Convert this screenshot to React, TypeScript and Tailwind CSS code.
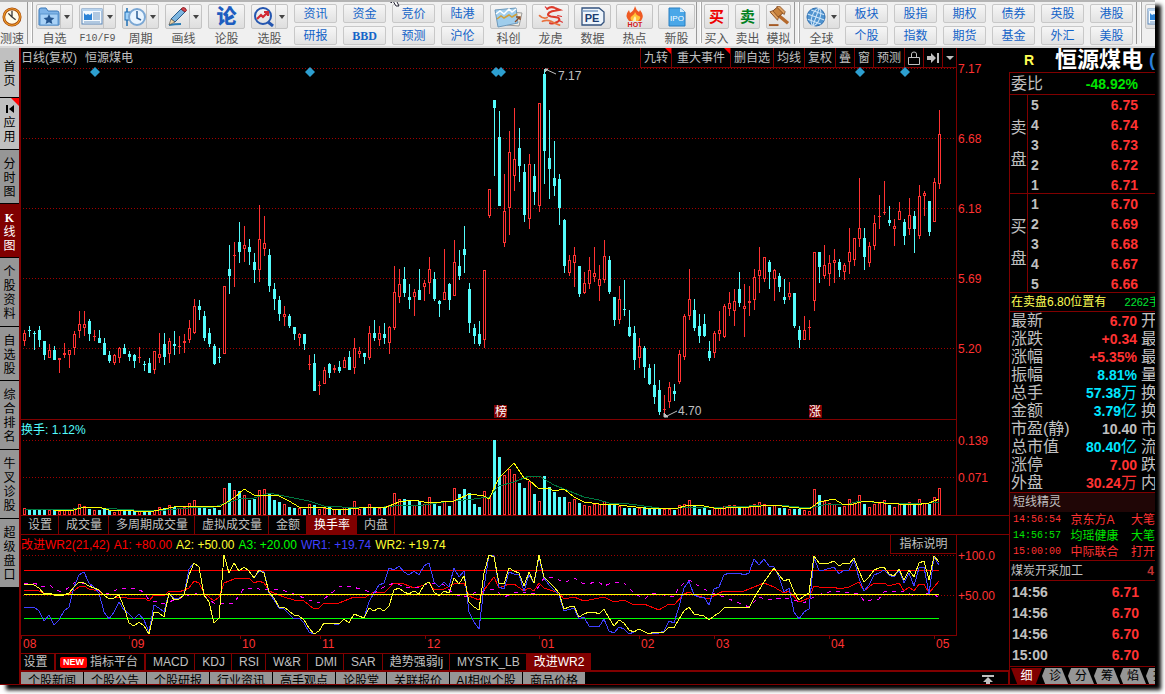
import type { ReactNode } from 'react';

// One entry per day: high, body top, body bottom, low (chart y), 1 = up / 0 = down
const CANDLES = `330,333,341,346,1 326,330,331,337,0 331,333,334,350,0 326,330,340,347,0 341,341,355,360,0
344,350,358,358,1 346,350,360,360,0 358,358,360,373,1 343,353,355,358,1 350,350,355,368,1
331,334,348,355,1 311,324,331,338,1 311,324,328,336,1 319,321,334,341,0 330,336,337,341,1
330,338,343,343,0 338,343,355,355,0 351,355,361,363,0 354,355,363,365,1 347,348,358,363,1
344,348,354,354,0 351,354,357,361,0 354,355,361,368,0 347,357,358,363,1 361,364,365,371,0
358,363,373,373,0 351,351,370,374,1 333,354,358,363,1 333,344,357,365,0 338,341,354,363,1
331,344,346,355,0 336,346,347,354,1 334,341,343,353,1 320,328,340,343,1 299,306,333,334,1
300,306,310,320,0 311,316,338,341,0 328,333,344,347,0 344,346,364,365,0 348,357,358,363,0
286,286,354,354,1 245,269,276,294,0 242,255,256,287,1 222,242,252,263,0 226,245,249,262,1
239,247,252,265,0 253,262,270,283,0 205,239,270,282,1 216,243,249,256,1 249,255,286,292,0
283,289,299,310,0 296,300,314,321,0 306,314,317,326,1 314,316,326,328,0 327,327,334,340,0
333,334,338,346,1 334,334,344,350,0 355,364,365,370,1 354,363,391,391,0 381,385,386,395,1
367,370,384,384,1 363,364,373,378,0 365,368,370,373,1 361,367,371,373,0 357,360,368,368,1
351,357,370,370,0 338,348,368,374,1 347,351,354,358,1 353,353,357,364,0 326,333,358,360,1
320,333,338,341,0 326,333,340,346,1 323,334,338,344,0 326,327,343,354,1 266,292,328,330,1
269,284,297,303,1 267,279,293,297,0 284,297,300,309,0 289,292,297,316,1 269,290,300,300,0
280,283,287,301,1 257,269,283,294,1 272,279,299,301,0 300,301,304,317,0 249,292,300,300,1
283,284,300,310,0 240,262,296,296,1 250,266,276,280,0 226,249,255,273,0 283,289,323,333,0
324,328,336,344,0 321,334,344,346,0 270,270,340,348,1 189,189,216,218,1 100,100,108,176,0
111,137,206,206,0 174,211,243,247,1 131,152,208,235,1 108,159,176,191,1 128,148,166,182,0
164,172,215,222,0 154,164,219,229,1 164,176,192,205,0 103,103,206,212,1 69,74,151,184,0
110,158,169,199,0 141,178,186,196,0 174,179,208,225,0 219,220,266,273,0 255,260,273,276,1
247,255,263,287,1 266,266,294,297,0 272,283,293,294,1 257,270,284,289,1 247,273,277,282,1
265,279,286,301,1 240,256,280,283,1 256,260,292,294,0 297,297,320,326,0 286,299,320,324,1
280,309,310,316,0 310,327,336,337,0 326,333,360,370,0 338,346,358,368,1 346,348,367,378,0
364,368,384,385,0 364,385,397,404,0 380,390,412,415,0 395,409,410,416,1 382,387,402,408,1
384,391,394,401,0 350,354,382,384,1 314,316,357,360,1 269,299,316,320,1 299,310,328,331,0
314,326,336,343,0 314,324,336,337,0 341,351,358,361,0 331,333,353,358,1 311,330,334,341,1
304,306,337,338,1 292,303,309,316,1 289,301,311,326,1 272,289,303,307,0 284,306,309,337,1
286,301,303,316,1 269,277,300,310,1 247,270,276,293,1 257,257,279,282,1 260,262,272,289,0
269,270,279,301,1 273,276,287,292,0 279,297,300,304,0 282,293,297,300,1 293,293,326,328,0
326,330,340,348,0 316,330,340,340,1 320,327,328,340,1 252,252,301,311,1 252,252,267,283,0
245,265,276,279,1 255,263,274,286,1 249,260,263,283,1 259,262,270,277,0 263,265,272,280,1
228,252,262,274,1 238,238,260,266,1 178,228,239,247,1 228,238,257,270,0 242,246,263,267,1
215,223,246,250,1 195,216,217,229,1 181,212,213,215,1 206,220,223,226,0 219,226,229,246,1
202,211,220,220,1 219,222,236,245,0 198,215,229,235,1 211,216,229,253,0 185,196,236,239,1
191,193,196,216,1 201,201,232,236,0 178,182,222,222,1 110,134,184,189,1`
  .split(/\s+/)
  .map((c) => c.split(',').map(Number));

const TURNOVER = [
  7, 5, 5, 5, 5, 5, 5, 4, 5, 5, 7, 11, 9, 6, 5, 5, 6, 5, 3, 5, 6, 5, 5, 5, 3, 3, 5, 8, 7, 10, 8, 7, 8, 12, 15, 8, 8, 6,
  7, 5, 27, 32, 25, 24, 20, 15, 16, 25, 26, 21, 15, 13, 11, 8, 7, 7, 6, 11, 10, 6, 7, 8, 6, 6, 8, 8, 14, 6, 7, 11, 8, 7,
  8, 10, 22, 16, 16, 14, 10, 14, 11, 18, 12, 9, 14, 9, 27, 21, 26, 22, 11, 8, 24, 18, 75, 58, 40, 46, 41, 32, 27, 34,
  21, 14, 39, 28, 23, 18, 18, 13, 16, 12, 10, 9, 11, 11, 14, 11, 10, 9, 7, 7, 7, 7, 8, 7, 7, 7, 6, 6, 5, 10, 11, 15, 9,
  6, 7, 5, 7, 8, 9, 10, 10, 7, 8, 8, 11, 13, 11, 8, 10, 7, 7, 6, 6, 6, 5, 4, 26, 20, 14, 12, 11, 8, 9, 16, 12, 20, 11,
  8, 11, 12, 15, 10, 8, 11, 10, 13, 10, 16, 12, 11, 18, 27,
];

// Line series are "day,y" pairs; days in between are interpolated
const TURNOVER_MA5 =
  '6,510 10,510 12,507 15,507 17,510 22,511 26,511 30,507 33,506 39,507 42,498 44,489 46,495 51,496 53,501 55,507 59,507 63,510 69,507 72,508 75,502 78,500 81,503 86,501 89,494 92,496 93,499 95,478 98,463 100,478 101,480 103,489 105,488 106,491 108,489 110,497 112,502 115,504 119,505 124,508 130,509 133,505 136,506 139,509 142,507 145,507 150,505 153,507 157,509 159,502 162,499 164,505 166,504 168,501 172,503 178,505 181,503 183,499';
const TURNOVER_MA10 =
  '0,509 9,510 12,507 22,510 26,511 33,508 38,507 43,499 46,498 49,493 52,496 57,501 60,506 67,508 72,507 76,505 80,505 84,502 90,499 93,497 95,486 98,482 101,476 103,476 106,485 109,491 112,497 115,500 117,503 121,504 127,508 131,508 140,507 150,505 153,506 157,508 160,505 165,504 167,501 175,504 181,503 183,502';
const WR1 =
  '0,607 2,607 3,611 4,621 5,615 6,625 7,620 8,611 9,607 10,587 11,575 12,572 13,583 14,587 15,593 16,612 17,619 18,612 19,602 20,610 21,614 22,619 23,614 24,620 25,632 26,605 27,608 28,612 29,593 30,598 31,598 32,595 33,569 34,563 35,567 36,595 37,602 38,623 39,618 40,555 41,573 42,563 43,571 44,567 45,571 46,578 47,571 48,572 49,593 50,600 51,608 52,609 53,614 54,619 55,618 56,623 57,632 58,634 59,631 60,623 62,624 63,624 64,619 65,623 66,614 68,618 69,602 70,593 71,585 72,583 73,568 74,570 75,566 76,572 77,575 78,571 79,575 80,566 81,563 82,582 83,587 84,582 85,587 86,568 87,577 88,571 89,612 90,622 91,629 92,587 93,555 94,556 95,587 96,589 97,572 98,574 99,575 100,591 101,575 102,583 103,557 104,578 105,585 106,590 107,595 108,611 110,608 111,619 112,617 113,626 115,627 116,619 117,631 118,633 119,627 120,629 121,634 122,632 123,629 125,634 127,633 128,631 129,621 130,623 131,607 132,588 133,581 134,595 135,597 136,597 137,605 138,589 139,587 140,575 141,573 143,573 144,575 145,573 146,559 147,565 148,559 149,566 150,567 151,577 152,592 153,588 154,612 155,619 156,612 157,609 158,558 159,570 160,570 162,567 163,574 164,570 165,570 166,560 167,578 168,591 169,585 170,575 171,573 172,570 173,575 174,577 175,570 176,583 177,573 178,586 179,568 180,567 181,594 182,557 183,565';
const WR2 =
  '0,584 2,585 3,588 4,594 5,593 6,595 8,595 9,593 10,587 11,582 12,583 13,586 14,588 15,590 16,595 17,599 18,598 19,595 20,607 21,623 22,626 23,622 24,626 25,634 26,612 27,613 28,617 29,593 30,600 31,599 32,595 33,575 34,563 35,567 36,595 37,602 38,623 39,618 40,555 41,573 42,563 43,571 44,567 45,571 46,578 47,570 48,573 49,592 50,598 51,607 52,607 53,611 54,615 55,616 56,620 57,628 58,634 59,631 60,623 63,624 64,619 65,623 66,614 68,618 69,608 70,611 71,608 72,611 73,606 74,590 75,588 76,592 77,594 78,591 79,594 80,585 81,582 82,592 83,596 84,591 85,593 86,578 87,584 88,576 89,602 90,607 91,610 92,573 93,555 94,557 95,583 96,584 97,568 98,571 99,573 100,586 101,572 102,583 103,555 104,577 105,582 106,587 107,593 108,609 109,607 110,606 111,617 112,614 113,612 114,612 115,614 116,609 117,618 118,626 119,620 120,623 121,630 122,632 123,629 125,634 126,632 128,632 129,627 130,628 131,619 132,611 133,607 134,614 136,616 137,620 138,616 139,613 140,608 142,607 145,608 146,598 147,590 148,582 149,575 150,568 151,575 152,581 153,579 154,592 155,600 156,596 157,593 158,556 159,563 161,563 162,561 163,566 164,563 165,564 166,558 167,571 168,582 169,577 170,570 171,568 172,567 173,574 174,576 175,569 176,580 177,570 178,577 179,563 180,561 181,580 182,556 183,562';
const WR_RED =
  '0,590 3,591 4,593 7,596 9,594 11,587 12,586 13,589 15,591 17,599 19,597 22,599 24,598 25,601 26,595 28,596 29,591 31,592 33,588 34,581 35,583 36,593 38,601 39,597 40,583 42,579 45,578 46,583 47,581 48,583 49,591 52,597 54,600 56,601 58,609 59,608 60,603 63,603 64,601 66,597 68,598 70,592 72,593 74,583 76,584 78,588 80,585 81,582 82,590 84,589 86,584 88,583 89,596 91,600 92,590 94,577 95,588 97,584 98,584 100,591 101,588 102,591 103,583 104,588 107,593 108,599 110,597 112,601 115,598 116,597 118,602 120,600 122,605 124,604 127,610 129,604 130,605 132,594 133,592 134,595 137,599 139,593 140,591 144,591 147,585 148,583 150,587 152,593 153,591 155,602 157,598 158,586 160,588 162,587 163,589 165,587 167,582 168,591 170,583 172,583 173,586 175,583 176,591 177,587 178,591 179,584 180,584 181,593 183,581';
const WR_DASH =
  '0,584 2,583 4,587 5,585 7,591 8,591 10,583 11,582 13,585 15,591 17,594 19,588 22,588 24,592 25,600 28,604 30,600 32,597 34,593 36,596 38,603 42,603 44,588 46,588 48,590 51,589 54,594 57,600 59,603 61,595 63,587 65,586 68,590 70,593 72,587 74,583 77,588 79,587 81,583 84,585 86,594 88,597 90,593 92,591 94,589 96,597 98,593 100,592 102,594 104,578 106,577 108,583 110,578 112,584 115,582 116,586 118,582 120,583 122,593 124,599 126,593 130,597 131,587 133,580 134,583 137,592 140,597 143,603 145,607 147,597 149,600 152,598 154,600 156,603 158,597 160,593 162,591 164,592 167,594 168,601 171,599 172,592 176,591 178,596 180,593 182,594 183,598';

const dayX = (day: number) => 3 + day * 5;

const toPoints = (series: string, top: number) =>
  series
    .split(' ')
    .map((p) => {
      const [day, y] = p.split(',').map(Number);
      return `${dayX(day)},${y - top}`;
    })
    .join(' ');

const MONTHS: [string, number][] = [
  ['08', 1], ['09', 109], ['10', 220], ['11', 300], ['12', 405],
  ['01', 519], ['02', 619], ['03', 694], ['04', 809], ['05', 914],
];

function Dotted({ y }: { y: number }) {
  return <line x1="2" x2="935" y1={y + 0.5} y2={y + 0.5} stroke="#a00000" strokeDasharray="1 2" />;
}

function AxisLabel({ y, children }: { y: number; children: string }) {
  return (
    <text x="937" y={y} fill="#ff3232" fontSize="12">
      {children}
    </text>
  );
}

function PriceChart() {
  const top = 68;
  return (
    <svg className="block h-[352px] w-full overflow-visible" shapeRendering="crispEdges">
      {[68, 138, 208, 278, 348].map((y) => (
        <Dotted key={y} y={y - top} />
      ))}
      {CANDLES.map(([high, open, close, low, up], i) => {
        const x = dayX(i);
        const color = up ? '#ff3232' : '#54fcfc';
        const h = Math.max(close - open, 1);
        return (
          <g key={i} fill={color}>
            <rect x={x} y={high - top} width="1" height={low - high} />
            <rect x={x - 1} y={open - top} width="3" height={h} />
            {up === 1 && h > 2 && <rect x={x} y={open - top + 1} width="1" height={h - 2} fill="#000" />}
          </g>
        );
      })}
      {[95, 310, 496, 501, 860, 905].map((x) => (
        <path key={x} d={`M${x - 26} 4l5-5 5 5-5 5z`} fill="#2d9fd0" shapeRendering="auto" />
      ))}
      <g stroke="#c0c0c0" fill="#c0c0c0" shapeRendering="auto">
        <path d="M524 1l11 5M524 1h3l-3 3zM644 349l12-6M643 349h4l-4-4z" />
      </g>
      <g fill="#c0c0c0" fontSize="12">
        <text x="537" y="12">7.17</text>
        <text x="657" y="347">4.70</text>
      </g>
      <g fill="#800000">
        <rect x="473" y="337" width="13" height="13" />
        <rect x="788" y="337" width="13" height="13" />
      </g>
      <g fill="#fff" fontSize="12">
        <text x="474" y="348">榜</text>
        <text x="788" y="348">涨</text>
      </g>
      <AxisLabel y={5}>7.17</AxisLabel>
      <AxisLabel y={75}>6.68</AxisLabel>
      <AxisLabel y={145}>6.18</AxisLabel>
      <AxisLabel y={215}>5.69</AxisLabel>
      <AxisLabel y={285}>5.20</AxisLabel>
      <rect x="935" y="0" width="1" height="352" fill="#800000" />
      <rect x="0" y="351" width="935" height="1" fill="#800000" />
    </svg>
  );
}

function TurnoverChart() {
  const top = 420;
  return (
    <svg className="block h-[95px] w-full" shapeRendering="crispEdges">
      <text x="0" y="14" fill="#54fcfc" fontSize="12">
        换手: 1.12%
      </text>
      <Dotted y={20} />
      <Dotted y={57} />
      {TURNOVER.map((h, i) => {
        const up = CANDLES[i][4] === 1;
        return (
          <g key={i}>
            <rect x={dayX(i) - 1} y={95 - h} width="3" height={h} fill={up ? '#ff3232' : '#54fcfc'} />
            {up && <rect x={dayX(i)} y={96 - h} width="1" height={h - 2} fill="#000" />}
          </g>
        );
      })}
      <polyline points={toPoints(TURNOVER_MA10, top)} fill="none" stroke="#007840" />
      <polyline points={toPoints(TURNOVER_MA5, top)} fill="none" stroke="#ffff00" />
      <AxisLabel y={25}>0.139</AxisLabel>
      <AxisLabel y={62}>0.071</AxisLabel>
      <rect x="935" y="0" width="1" height="95" fill="#800000" />
    </svg>
  );
}

function WrChart() {
  const top = 554;
  return (
    <svg className="block h-[99px] w-full overflow-visible" shapeRendering="crispEdges">
      <Dotted y={1} />
      <Dotted y={41} />
      <rect x="3" y="16" width="915" height="1" fill="#ff0000" />
      <rect x="3" y="64" width="915" height="1" fill="#00ff00" />
      <polyline points={toPoints(WR_RED, top)} fill="none" stroke="#ff0000" />
      <polyline points={toPoints(WR_DASH, top)} fill="none" stroke="#ff00ff" strokeDasharray="4 5" />
      <polyline points={toPoints(WR1, top)} fill="none" stroke="#4040ff" />
      <polyline points={toPoints(WR2, top)} fill="none" stroke="#ffff30" />
      <rect x="3" y="40" width="915" height="1" fill="#ffff00" />
      <rect x="0" y="81" width="936" height="1" fill="#800000" />
      <rect x="935" y="-19" width="1" height="101" fill="#800000" />
      {MONTHS.map(([label, x]) => (
        <g key={label}>
          <rect x={x - 1} y="81" width="1" height="4" fill="#800000" />
          <text x={x + 1} y="94" fill="#ff3232" fontSize="12">
            {label}
          </text>
        </g>
      ))}
      <AxisLabel y={6}>+100.0</AxisLabel>
      <AxisLabel y={46}>+50.00</AxisLabel>
    </svg>
  );
}

/* ---------- toolbar ---------- */

const ICONS: Record<string, ReactNode> = {
  speed: (
    <svg viewBox="0 0 22 22" className="size-[20px]">
      <circle cx="11" cy="11" r="9" fill="#fffbe8" stroke="#a5480c" strokeWidth="3" />
      <circle cx="11" cy="11" r="9" fill="none" stroke="#f5a52a" strokeWidth="1.200" />
      <path d="M11 4v7l4 3M11 11L7 7" stroke="#333" strokeWidth="1.400" fill="none" />
    </svg>
  ),
  folder: (
    <svg viewBox="0 0 22 20" className="h-[20px] w-[22px]">
      <path d="M1 18V3q0-2 2-2h5l2 3h9q2 0 2 2v12z" fill="#7fb4e8" stroke="#3b78b8" />
      <path d="M2 18V7h18v11z" fill="#a9d2f7" stroke="#5c96cf" />
      <path d="M11 7l1.600 3.500 3.800.4-2.900 2.500.9 3.700L11 15.200l-3.400 1.900.9-3.700-2.900-2.500 3.800-.4z" fill="#24558f" />
    </svg>
  ),
  news: (
    <svg viewBox="0 0 22 20" className="h-[20px] w-[22px]">
      <rect x="1" y="2" width="20" height="15" fill="#f4faff" stroke="#5a86b8" />
      <rect x="1" y="2" width="20" height="2" fill="#b6d3ee" />
      <path d="M3 6l2 2 2-1 2 1 2-2v7H3z" fill="#2c83d6" />
      <path d="M12 6h7M12 8h7M12 10h7M12 12h7M3 15h16" stroke="#6f97c2" />
    </svg>
  ),
  period: (
    <svg viewBox="0 0 22 20" className="h-[20px] w-[22px]">
      <path d="M3 1v18" stroke="#1f6fb5" strokeWidth="1.500" />
      <rect x="1" y="5" width="5" height="8" fill="#9fd2fa" stroke="#1f6fb5" />
      <circle cx="13" cy="10" r="8" fill="#eaf5ff" stroke="#7aa7d4" strokeWidth="2" />
      <path d="M13 4v7l4 2" stroke="#2c5f98" strokeWidth="1.500" fill="none" />
    </svg>
  ),
  pencil: (
    <svg viewBox="0 0 22 20" className="h-[20px] w-[22px]">
      <path d="M2 18q6-1 12-1" stroke="#2d7db4" strokeWidth="2" fill="none" />
      <path d="M4 12L14 2l4 3L8 15z" fill="#7db5df" stroke="#2a5d8c" />
      <path d="M14 2l2-1.500q3 0 3.500 3L18 5z" fill="#d8424a" stroke="#8c2a30" />
      <path d="M4 12l4 3-6 3z" fill="#f0d7a8" stroke="#444" strokeWidth=".6" />
    </svg>
  ),
  forum: <span className="text-[20px] leading-5 font-black text-[#1d5dc0]">论</span>,
  pick: (
    <svg viewBox="0 0 22 20" className="h-[20px] w-[22px]" fill="none">
      <circle cx="10" cy="9" r="8" stroke="#2456b0" strokeWidth="2" />
      <path d="M15 15l5 4" stroke="#2456b0" strokeWidth="3" />
      <path d="M4 12l4-4 2 2 5-5M11 5h4v4" stroke="#d22a35" strokeWidth="2.200" />
    </svg>
  ),
  chart: (
    <svg viewBox="0 0 30 22" className="h-[22px] w-[30px]">
      <path d="M15 6l13 1-3 13-12-1z" fill="#f4efe4" stroke="#9a9a9a" />
      <path d="M1 4l21-2 2 15-20 4z" fill="#9fcdec" stroke="#6d98ba" />
      <path d="M2 8l4-3 4 3 5-5 3 3 4-3" fill="none" stroke="#fff" strokeWidth="1.500" />
      <path d="M3 13l4-3 3 2 5-3 3 2 5-3" fill="none" stroke="#d0a03a" strokeWidth="1.500" />
      <path d="M21 16l5-5M22 11h4v3" fill="none" stroke="#8b4a25" strokeWidth="1.300" />
    </svg>
  ),
  dragon: (
    <svg viewBox="0 0 26 22" className="h-[21px] w-[26px]" fill="none" strokeLinecap="round">
      <path d="M9 3q4-3 8-1l5 2-5 1q-3 0-6 2-3 3 2 4l7 1q4 3-1 5-3 2-7 1" stroke="#dd3b2b" strokeWidth="2.200" />
      <path d="M1 10q4 4 8 2M4 16q5-2 9 0 5 3 9 4" stroke="#e8713e" strokeWidth="1.800" />
      <path d="M20 10l4 1M21 15l4 2M9 3L7 1" stroke="#d33" strokeWidth="1.200" />
    </svg>
  ),
  pe: (
    <svg viewBox="0 0 24 20" className="h-[20px] w-[24px]">
      <path d="M1 1h17l5 4v10l-3 3H1z" fill="#eef5fc" stroke="#33527d" strokeWidth="1.300" />
      <path d="M1 4h16" stroke="#7d9cc4" strokeWidth="1.500" />
      <text x="11" y="15" textAnchor="middle" fontSize="11" fontWeight="bold" fill="#1c3c70">PE</text>
    </svg>
  ),
  hot: (
    <svg viewBox="0 0 26 22" className="h-[22px] w-[26px]">
      <path d="M13 0q1 4 4 6l1-2q5 6 1 11H7Q2 10 7 4l1 3q4-2 5-7z" fill="#ef5a22" />
      <path d="M13 6q1 3 4 4t-1 5h-6q-3-3 0-5t3-4z" fill="#ffc33a" />
      <path d="M13 10q2 2 1 5h-3q0-3 2-5z" fill="#fff3b5" />
      <text x="13" y="21" textAnchor="middle" fontSize="7" fontWeight="bold" fill="#d31818">HOT</text>
    </svg>
  ),
  ipo: (
    <svg viewBox="0 0 18 20" className="h-[20px] w-[18px]">
      <path d="M1 1h11l5 4v14H1z" fill="#4aa7e8" stroke="#2a7fc0" />
      <path d="M12 1l5 4h-5z" fill="#d4ecfc" />
      <text x="9" y="14" textAnchor="middle" fontSize="8" fill="#fff">IPO</text>
    </svg>
  ),
  buy: <span className="text-[15px] leading-5 font-bold text-[#ee0000]">买</span>,
  sell: <span className="text-[15px] leading-5 font-bold text-[#008020]">卖</span>,
  hammer: (
    <svg viewBox="0 0 24 22" className="h-[21px] w-[23px]">
      <path d="M2 20h10" stroke="#a55a25" strokeWidth="2" />
      <path d="M11 9l11 9" stroke="#b5692c" strokeWidth="3.500" />
      <path d="M4 7l7-6 6 6-7 6z" fill="#c8823c" stroke="#7d431a" />
      <path d="M3 6l3-1 6 7-1 3zM10 1l3-1 6 6-1 3z" fill="#dfa262" stroke="#7d431a" strokeWidth=".8" />
    </svg>
  ),
  globe: (
    <svg viewBox="0 0 20 20" className="size-[20px]">
      <circle cx="10" cy="10" r="9" fill="#4f93cf" stroke="#2d6daf" />
      <g fill="none" stroke="#cfe6f9" transform="rotate(20 10 10)">
        <ellipse cx="10" cy="10" rx="4" ry="9" />
        <path d="M10 1v18M1 10h18M3 5h14M3 15h14" />
      </g>
    </svg>
  ),
};

function ToolButton({ icon, label, menu, small }: { icon: string; label: string; menu?: boolean; small?: boolean }) {
  return (
    <div className={`flex shrink-0 flex-col items-center ${small ? 'w-[25px]' : 'w-[37px]'}`}>
      <button
        type="button"
        aria-label={label}
        className="flex h-[25px] w-full rounded-xs border border-[#c4c4c4] bg-linear-to-b from-[#f6f6f6] to-[#dedede]"
      >
        <span className="flex h-full flex-1 items-center justify-center">{ICONS[icon]}</span>
        {menu && (
          <span className="flex h-full w-3 items-center justify-center border-l border-[#c4c4c4]">
            <span className="border-x-3 border-t-4 border-x-transparent border-t-[#444]" />
          </span>
        )}
      </button>
      <span
        className={`mt-[2px] leading-4 whitespace-nowrap text-[#555] ${label === 'F10/F9' ? "font-['Liberation_Mono','Noto_Sans_CJK_SC',monospace] text-[10px]" : 'text-[12px]'}`}
      >
        {label}
      </span>
    </div>
  );
}

function TextPair({ labels }: { labels: string[] }) {
  return (
    <div className="flex w-[43px] shrink-0 flex-col gap-[3px]">
      {labels.map((label) => (
        <button
          key={label}
          type="button"
          className={`h-[19px] rounded-xs border border-[#c8c8c8] bg-linear-to-b from-[#f6f6f6] to-[#e2e2e2] text-[12px] leading-4 text-[#1464c8] ${label === 'BBD' ? "font-['Liberation_Serif',serif] font-bold" : ''}`}
        >
          {label}
        </button>
      ))}
    </div>
  );
}

function Separator() {
  return (
    <div className="-mt-1 flex h-[44px] w-[6px] shrink-0 justify-between self-start border-l border-[#999]">
      <span className="mt-[1px] ml-auto h-[42px] w-[2px] border-r border-[#aaa] bg-white" />
    </div>
  );
}

const PAIRS_LEFT = [['资讯', '研报'], ['资金', 'BBD'], ['竞价', '预测'], ['陆港', '沪伦']];
const PAIRS_RIGHT = [['板块', '个股'], ['股指', '指数'], ['期权', '期货'], ['债券', '基金'], ['英股', '外汇'], ['港股', '美股']];

function Toolbar() {
  return (
    <header className="relative flex h-[48px] items-start overflow-hidden border-t-2 border-b-2 border-t-[#b4b4b4] border-b-[#d8d8d8] bg-[#f0f0f0] pt-[2px]">
      <div className="flex w-[27px] shrink-0 flex-col items-start">
        <button type="button" aria-label="测速" className="ml-[2px] flex h-[25px] items-center">
          {ICONS.speed}
        </button>
        <span className="mt-[2px] text-[12px] leading-4 whitespace-nowrap text-[#555]">测速</span>
      </div>
      <Separator />
      <div className="ml-[3px] flex gap-[6px]">
        <ToolButton icon="folder" label="自选" menu />
        <ToolButton icon="news" label="F10/F9" menu />
        <ToolButton icon="period" label="周期" menu />
        <ToolButton icon="pencil" label="画线" menu />
        <ToolButton icon="forum" label="论股" />
        <ToolButton icon="pick" label="选股" menu />
        {PAIRS_LEFT.map((p) => (
          <TextPair key={p[0]} labels={p} />
        ))}
      </div>
      <div className="ml-[6px] flex gap-[5px]">
        <ToolButton icon="chart" label="科创" />
        <ToolButton icon="dragon" label="龙虎" />
        <ToolButton icon="pe" label="数据" />
        <ToolButton icon="hot" label="热点" />
        <ToolButton icon="ipo" label="新股" />
      </div>
      <div className="ml-[1px] flex">
        <Separator />
      </div>
      <div className="ml-[2px] flex gap-[6px]">
        <ToolButton icon="buy" label="买入" small />
        <ToolButton icon="sell" label="卖出" small />
        <ToolButton icon="hammer" label="模拟" small />
      </div>
      <div className="mr-[3px] ml-[3px] flex">
        <Separator />
      </div>
      <ToolButton icon="globe" label="全球" menu />
      <div className="ml-[5px] flex gap-[6px]">
        {PAIRS_RIGHT.map((p) => (
          <TextPair key={p[0]} labels={p} />
        ))}
      </div>
      <div className="mr-[3px] ml-[3px] flex">
        <Separator />
      </div>
      <ToolButton icon="news" label="自" menu />
      <svg className="absolute -top-[2px] left-[390px] h-[7px] w-[11px]" viewBox="0 0 11 7">
        <path d="M1 0v3l2-2 3 5h3L6 0z" fill="#fff" stroke="#223" />
      </svg>
    </header>
  );
}

/* ---------- left side tabs ---------- */

const SIDE_TABS: { label: string; style: string }[] = [
  { label: '首页', style: 'h-[50px] bg-[#c0c0c0] text-black' },
  { label: '应用', style: 'h-[52px] bg-[#c0c0c0] text-black' },
  { label: '分时图', style: 'h-[54px] bg-[#969696] text-black' },
  { label: 'K线图', style: 'h-[54px] bg-[#800000] text-white' },
  { label: '个股资料', style: 'h-[69px] bg-[#969696] text-black' },
  { label: '自选股', style: 'h-[54px] bg-[#969696] text-black' },
  { label: '综合排名', style: 'h-[69px] bg-[#969696] text-black' },
  { label: '牛叉诊股', style: 'h-[69px] bg-[#969696] text-black' },
  { label: '超级盘口', style: 'h-[69px] bg-[#969696] text-black' },
];

function SideTabs() {
  return (
    <nav className="flex w-[21px] shrink-0 flex-col border-r-2 border-[#800000] bg-black">
      {SIDE_TABS.map(({ label, style }) => (
        <button
          key={label}
          type="button"
          className={`relative flex flex-col items-center justify-center border-b border-black pt-[2px] text-[12px] leading-[14px] ${style}`}
        >
          {label === '应用' && (
            <>
              <span className="absolute top-0 right-0 border-t-8 border-l-8 border-t-[#ff0000] border-l-transparent" />
              <svg viewBox="0 0 8 8" className="mb-[3px] size-[8px]">
                <path d="M0 0h2v8H0zM8 0v8L3 4z" />
              </svg>
            </>
          )}
          {label.split('').map((ch) => (
            <span key={ch} className={ch === 'K' ? "font-['Liberation_Serif',serif] font-bold" : ''}>
              {ch}
            </span>
          ))}
        </button>
      ))}
    </nav>
  );
}

/* ---------- chart header and tab strips ---------- */

function ChartHeader() {
  const items = ['九转', '重大事件', '删自选', '均线', '复权', '叠', '窗', '预测'];
  return (
    <div className="flex h-[20px] items-center justify-between text-[12px] leading-4 text-[#c0c0c0]">
      <h1>
        日线(复权)<span className="ml-[8px]">恒源煤电</span>
      </h1>
      <div className="mr-[52px] flex h-full border-r border-b border-[#800000]">
        {items.map((item, i) => (
          <button
            key={item}
            type="button"
            className={`relative border-l border-[#800000] whitespace-nowrap ${item === '重大事件' ? 'px-[5px]' : 'px-[3px]'}`}
          >
            {item}
            {i < 2 && (
              <span className="absolute top-0 right-0 border-t-6 border-l-6 border-t-[#ff0000] border-l-transparent" />
            )}
          </button>
        ))}
        <button type="button" aria-label="锁定" className="flex w-[19px] items-center justify-center border-l border-[#800000]">
          <svg viewBox="0 0 12 14" className="h-[14px] w-[12px]" fill="none" stroke="#c0c0c0">
            <path d="M.5 6.500h11v7H.5zM3.500 6V3q0-2 2.500-2t2.500 2v3" />
          </svg>
        </button>
        <button type="button" aria-label="跳到最新" className="flex w-[19px] items-center justify-center border-l border-[#800000]">
          <svg viewBox="0 0 13 10" className="h-[10px] w-[13px]" fill="#c0c0c0">
            <path d="M0 3h4V0l5 5-5 5V7H0zM10 0h2v10h-2z" />
          </svg>
        </button>
        <button type="button" aria-label="更多" className="flex w-[14px] items-center justify-center border-l border-[#800000]">
          <span className="border-x-4 border-t-4 border-x-transparent border-t-[#c0c0c0]" />
        </button>
      </div>
    </div>
  );
}

function SubTabs() {
  const tabs = ['设置', '成交量', '多周期成交量', '虚拟成交量', '金额', '换手率', '内盘'];
  return (
    <div className="flex h-[20px] border-y border-[#800000] text-[12px] leading-4 text-[#c0c0c0]">
      {tabs.map((tab) => (
        <button
          key={tab}
          type="button"
          className={`border-r border-[#800000] pr-[6px] pl-[7px] whitespace-nowrap ${tab === '换手率' ? 'bg-[#800000] text-white' : ''}`}
        >
          {tab}
        </button>
      ))}
    </div>
  );
}

function WrLegend() {
  return (
    <div className="flex h-[19px] items-center text-[12px] leading-4 whitespace-nowrap">
      <div className="flex flex-1 gap-[4px]">
        <span className="text-[#ff0000]">改进WR2(21,42)</span>
        <span className="text-[#ff0000]">A1: +80.00</span>
        <span className="text-[#ffff30]">A2: +50.00</span>
        <span className="text-[#00ff00]">A3: +20.00</span>
        <span className="text-[#4040ff]">WR1: +19.74</span>
        <span className="text-[#ffff30]">WR2: +19.74</span>
      </div>
      <button type="button" className="mr-[52px] h-full w-[67px] border-x border-b border-[#800000] text-[#c0c0c0]">
        指标说明
      </button>
    </div>
  );
}

function IndicatorTabs() {
  const tabs = ['MACD', 'KDJ', 'RSI', 'W&R', 'DMI', 'SAR', '趋势强弱lj', 'MYSTK_LB', '改进WR2'];
  return (
    <div className="flex h-[19px] border-b-2 border-[#800000] text-[12px] leading-4 text-[#c0c0c0]">
      <button type="button" className="w-[34px] border-t border-r border-[#800000] pr-1">
        设置
      </button>
      <button type="button" className="flex w-[91px] items-center gap-[3px] border-t border-r-2 border-l border-[#800000] pl-[4px] whitespace-nowrap">
        <span className="rounded-xs bg-[#ff0000] px-[3px] text-[9px] leading-[11px] font-bold text-white">NEW</span>
        指标平台
      </button>
      {tabs.map((tab) => (
        <button
          key={tab}
          type="button"
          className={`border-t border-r border-[#800000] pr-[6px] pl-[7px] whitespace-nowrap ${tab === '改进WR2' ? 'bg-[#800000] text-white' : ''}`}
        >
          {tab}
        </button>
      ))}
    </div>
  );
}

function NewsTabs() {
  const tabs = ['个股新闻', '个股公告', '个股研报', '行业资讯', '高手观点', '论股堂', '关联报价', 'AI相似个股', '商品价格'];
  return (
    <div className="flex h-[12px] items-start overflow-hidden border-r border-[#800000] text-[12px] leading-4">
      {tabs.map((tab) => (
        <button
          key={tab}
          type="button"
          className={`mr-px h-[18px] shrink-0 bg-[#969696] whitespace-nowrap text-black ${tab === '论股堂' ? 'w-[50px]' : tab === 'AI相似个股' ? 'w-[72px]' : 'w-[62px]'}`}
        >
          {tab}
        </button>
      ))}
      <button type="button" aria-label="展开" className="mt-[3px] mr-[14px] ml-auto">
        <svg viewBox="0 0 12 9" className="block h-[9px] w-[12px]" fill="#c0c0c0">
          <path d="M0 0h12v2H0zM6 2l5 5H8v2H4V7H1z" />
        </svg>
      </button>
    </div>
  );
}

/* ---------- quote panel ---------- */

const SELLS = [['5', '6.75'], ['4', '6.74'], ['3', '6.73'], ['2', '6.72'], ['1', '6.71']];
const BUYS = [['1', '6.70'], ['2', '6.69'], ['3', '6.68'], ['4', '6.67'], ['5', '6.66']];

const STATS: [string, string, string, string, string][] = [
  ['最新', '6.70', '', 'text-[#ff3232]', '开'],
  ['涨跌', '+0.34', '', 'text-[#ff3232]', '最'],
  ['涨幅', '+5.35%', '', 'text-[#ff3232]', '最'],
  ['振幅', '8.81%', '', 'text-[#00e6ff]', '量'],
  ['总手', '57.38', '万', 'text-[#00e6ff]', '换'],
  ['金额', '3.79', '亿', 'text-[#00e6ff]', '换'],
  ['市盈(静)', '10.40', '', 'text-[#c0c0c0]', '市'],
  ['总市值', '80.40', '亿', 'text-[#00e6ff]', '流'],
  ['涨停', '7.00', '', 'text-[#ff3232]', '跌'],
  ['外盘', '30.24', '万', 'text-[#ff3232]', '内'],
];

const ALERTS = [
  { time: '14:56:54', name: '京东方A', note: '大笔', color: 'text-[#ff3232]' },
  { time: '14:56:57', name: '均瑶健康', note: '大笔', color: 'text-[#00e600]' },
  { time: '15:00:00', name: '中际联合', note: '打开', color: 'text-[#ff3232]' },
];

const TICKS = [['14:56', '6.71'], ['14:56', '6.70'], ['14:56', '6.70'], ['15:00', '6.70']];

function OrderSide({ title, rows }: { title: string; rows: string[][] }) {
  return (
    <div className="flex h-[99px] border-b border-[#800000]">
      <div className="flex w-[18px] flex-col items-center justify-center gap-[12px] border-r border-[#800000] text-[16px] leading-5 text-[#c0c0c0]">
        {title.split('').map((ch) => (
          <span key={ch}>{ch}</span>
        ))}
      </div>
      <table className="w-[110px] text-[14px] leading-5 font-bold">
        <tbody>
          {rows.map(([level, price]) => (
            <tr key={level}>
              <td className="py-0 pl-[3px] text-[#c0c0c0]">{level}</td>
              <td className="py-0 text-right text-[#ff3232]">{price}</td>
            </tr>
          ))}
        </tbody>
      </table>
    </div>
  );
}

function QuotePanel() {
  return (
    <aside className="flex w-[146px] shrink-0 flex-col overflow-hidden whitespace-nowrap">
      <div className="flex h-[24px] items-center">
        <span className="ml-[15px] w-[33px] text-[14px] font-bold text-[#ffff54]">R</span>
        <h2 className="text-[22px] leading-6 font-bold text-white">恒源煤电</h2>
        <span className="ml-[6px] text-[18px] leading-6 font-bold text-[#2a7fd8]">(</span>
      </div>
      <div className="flex flex-1 flex-col border-t border-l border-[#800000]">
        <div className="flex h-[22px] items-center justify-between border-b border-[#800000] pr-[17px] pl-[1px]">
          <span className="text-[16px] leading-5 text-[#c0c0c0]">委比</span>
          <span className="text-[14px] leading-5 font-bold text-[#00e600]">-48.92%</span>
        </div>
        <OrderSide title="卖盘" rows={SELLS} />
        <OrderSide title="买盘" rows={BUYS} />
        <div className="flex h-[19px] items-center justify-between border-b border-[#800000] pl-[1px] text-[12px] leading-4">
          <span className="text-[#ffff54]">在卖盘6.80位置有</span>
          <span className="-mr-[5px] text-[11px] text-[#00e632]">2262手</span>
        </div>
        <dl className="border-b border-[#800000]">
          {STATS.map(([label, value, unit, color, next]) => (
            <div key={label} className="flex h-[18px] items-center pl-[1px] text-[16px] leading-[18px] text-[#c0c0c0]">
              <dt>{label}</dt>
              <dd className={`flex flex-1 items-center justify-end ${color}`}>
                <span className="text-[14px] font-bold">{value}</span>
                {unit}
              </dd>
              <span className="ml-[4px] w-[14px]">{next}</span>
            </div>
          ))}
        </dl>
        <h3 className="h-[19px] bg-[#200606] pl-[3px] text-[12px] leading-[19px] text-[#c0c0c0]">短线精灵</h3>
        <ul className="border-b border-[#800000] text-[12px] leading-4">
          {ALERTS.map(({ time, name, note, color }) => (
            <li key={time} className={`flex pl-[3px] ${color}`}>
              <span className="w-[59px] font-['Liberation_Mono',monospace] text-[10px]">{time}</span>
              <span className="w-[62px]">{name}</span>
              <span>{note}</span>
            </li>
          ))}
        </ul>
        <div className="flex h-[20px] items-center justify-between border-b border-[#800000] pr-[1px] pl-[1px] text-[12px] leading-4">
          <span className="text-[#c0c0c0]">煤炭开采加工</span>
          <span className="font-bold text-[#c03232]">4</span>
        </div>
        <ul className="flex-1 pt-px text-[14px] leading-[21px] font-bold">
          {TICKS.map(([time, price], i) => (
            <li key={i} className="flex justify-between pr-[16px] pl-[2px]">
              <span className="text-[#c0c0c0]">{time}</span>
              <span className="text-[#ff3232]">{price}</span>
            </li>
          ))}
        </ul>
        <div className="flex h-[18px] items-start border-t border-[#800000] pt-px text-[12px] leading-4 text-black">
          <button
            type="button"
            className="ml-[1px] h-4 w-[31px] shrink-0 bg-[#800000] text-white [clip-path:polygon(0_0,100%_0,80%_100%,20%_100%)]"
          >
            细
          </button>
          {['诊', '分', '筹', '焰', '指'].map((tab) => (
            <button
              key={tab}
              type="button"
              className="h-4 w-[26px] shrink-0 bg-[#969696] [clip-path:polygon(12%_0,75%_0,100%_100%,12%_100%,0_50%)]"
            >
              {tab}
            </button>
          ))}
        </div>
      </div>
    </aside>
  );
}

export default function App() {
  return (
    <div className="bg-white pr-[10px] pb-[9px] font-['Liberation_Sans','Noto_Sans_CJK_SC',sans-serif]">
      <div className="bg-black shadow-[6px_5px_4px_#000]">
        <Toolbar />
        <div className="flex border-b border-[#800000]">
          <SideTabs />
          <main className="min-w-0 flex-1">
            <ChartHeader />
            <PriceChart />
            <TurnoverChart />
            <SubTabs />
            <WrLegend />
            <WrChart />
            <IndicatorTabs />
            <NewsTabs />
          </main>
          <QuotePanel />
        </div>
      </div>
    </div>
  );
}
